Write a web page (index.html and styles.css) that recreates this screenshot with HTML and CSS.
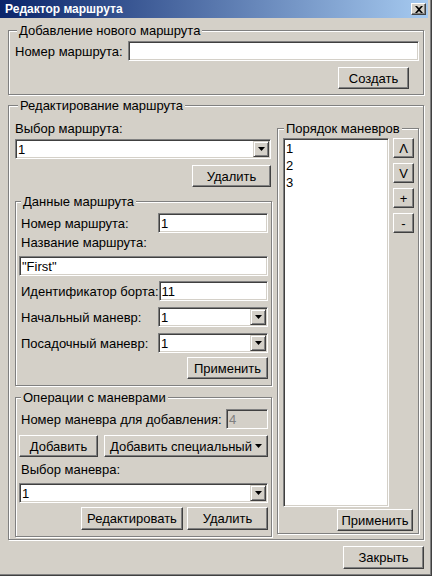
FILE: index.html
```html
<!DOCTYPE html>
<html>
<head>
<meta charset="utf-8">
<link rel="stylesheet" href="styles.css">
</head>
<body>
<div class="window">
  <div class="titlebar">
    <span class="title">Редактор маршрута</span>
    <span class="close"><svg width="8" height="7" viewBox="0 0 8 7"><path d="M0 0h2l2 2 2-2h2L5 3.5 8 7H6L4 5 2 7H0l3-3.5z" fill="#000"/></svg></span>
  </div>
  <div class="content">
    <fieldset class="group g-add">
      <legend>Добавление нового маршрута</legend>
      <div class="row">
        <span class="lbl w-add-lbl">Номер маршрута:</span>
        <div class="field grow"></div>
      </div>
      <div class="row end">
        <button class="btn b-create">Создать</button>
      </div>
    </fieldset>

    <fieldset class="group g-edit">
      <legend>Редактирование маршрута</legend>
      <div class="cols">
        <div class="leftcol">
          <span class="lbl">Выбор маршрута:</span>
          <div class="field combo c-route"><span>1</span><span class="drop"><svg width="7" height="4" viewBox="0 0 7 4"><path d="M0 0h7L3.5 4z" fill="#000"/></svg></span></div>
          <button class="btn b-del1">Удалить</button>

          <fieldset class="group g-inner g-data">
            <legend>Данные маршрута</legend>
            <div class="row between">
              <span class="lbl pl">Номер маршрута:</span>
              <div class="field w110">1</div>
            </div>
            <span class="lbl pl m2">Название маршрута:</span>
            <div class="field full m6">"First"</div>
            <div class="row between m5">
              <span class="lbl pl">Идентификатор борта:</span>
              <div class="field w110">11</div>
            </div>
            <div class="row between m6">
              <span class="lbl pl">Начальный маневр:</span>
              <div class="field combo w110"><span>1</span><span class="drop"><svg width="7" height="4" viewBox="0 0 7 4"><path d="M0 0h7L3.5 4z" fill="#000"/></svg></span></div>
            </div>
            <div class="row between m6">
              <span class="lbl pl">Посадочный маневр:</span>
              <div class="field combo w110"><span>1</span><span class="drop"><svg width="7" height="4" viewBox="0 0 7 4"><path d="M0 0h7L3.5 4z" fill="#000"/></svg></span></div>
            </div>
            <div class="row end m4">
              <button class="btn b-apply1">Применить</button>
            </div>
          </fieldset>

          <fieldset class="group g-inner g-ops">
            <legend>Операции с маневрами</legend>
            <div class="row between">
              <span class="lbl pl">Номер маневра для добавления:</span>
              <div class="field disabled w42">4</div>
            </div>
            <div class="row between m6">
              <button class="btn b-add">Добавить</button>
              <button class="btn b-addspec">Добавить специальный<svg class="caret" width="7" height="4" viewBox="0 0 7 4"><path d="M0 0h7L3.5 4z" fill="#000"/></svg></button>
            </div>
            <span class="lbl pl m5">Выбор маневра:</span>
            <div class="field combo full m6"><span>1</span><span class="drop"><svg width="7" height="4" viewBox="0 0 7 4"><path d="M0 0h7L3.5 4z" fill="#000"/></svg></span></div>
            <div class="row end gap4 m4">
              <button class="btn b-edit">Редактировать</button>
              <button class="btn b-del2">Удалить</button>
            </div>
          </fieldset>
        </div>

        <fieldset class="group g-order">
          <legend>Порядок маневров</legend>
          <div class="order">
            <div class="listbox">
              <div class="item">1</div>
              <div class="item">2</div>
              <div class="item">3</div>
            </div>
            <div class="mini">
              <button class="btn sq">Λ</button>
              <button class="btn sq">V</button>
              <button class="btn sq">+</button>
              <button class="btn sq">-</button>
            </div>
          </div>
          <div class="row end">
            <button class="btn b-apply2">Применить</button>
          </div>
        </fieldset>
      </div>
    </fieldset>

    <div class="row end">
      <button class="btn b-close">Закрыть</button>
    </div>
  </div>
</div>
</body>
</html>
```

FILE: styles.css
```css
* { box-sizing: border-box; }
html, body { margin: 0; padding: 0; }
body {
  font: 13px/15px "Liberation Sans", Arial, sans-serif;
  color: #000;
  background: #d4d0c8;
}
.window {
  width: 432px;
  height: 576px;
  background: #d4d0c8;
  box-shadow: inset -1px -1px 0 #404040, inset -2px -2px 0 #808080;
  display: flex;
  flex-direction: column;
  overflow: hidden;
}
.titlebar {
  height: 18px;
  width: 428px;
  flex: none;
  background: linear-gradient(to right, #0a246a, #a6caf0);
  display: flex;
  align-items: center;
  justify-content: space-between;
  padding: 0 2px 0 5px;
}
.title { color: #fff; font-weight: bold; font-size: 12px; line-height: 14px; }
.close {
  width: 15px;
  height: 12px;
  background: #d4d0c8;
  border: 1px solid;
  border-color: #fff #404040 #404040 #fff;
  box-shadow: inset -1px -1px 0 #808080;
  display: flex;
  align-items: center;
  justify-content: center;
}
.content {
  padding: 0 8px;
  display: flex;
  flex-direction: column;
}
fieldset.group {
  margin: 0;
  min-width: 0;
  border: 1px solid #808080;
  box-shadow: inset 1px 1px 0 #fff, 1px 1px 0 #fff;
  display: flex;
  flex-direction: column;
}
legend {
  padding: 0 2px;
  margin-left: 2px;
  line-height: 15px;
  background: #d4d0c8;
}
.g-add { margin-top: 5px !important; padding: 3px 4px 5px 6px; }
.g-edit { margin-top: 3px !important; padding: 8px 4px 2px 6px; }
.g-edit > legend { margin-left: 3px; }
.g-inner { width: 257px; padding: 4px 3px 6px 3px; }
.g-inner > legend { margin-left: 2px; }
.g-data { margin-top: 7px !important; }
.g-ops { margin-top: 4px !important; }
.g-order { width: 142px; padding: 2px 4px 2px 5px; }
.g-order > legend { margin-left: 1px; }

.row { display: flex; align-items: center; }
.row.end { justify-content: flex-end; }
.row.between { justify-content: space-between; }
.gap4 { gap: 4px; }
.grow { flex: 1; }
.lbl { line-height: 15px; white-space: nowrap; }
.pl { padding-left: 2px; }
.w-add-lbl { width: 113px; }
.m2 { margin-top: 2px; }
.m4 { margin-top: 4px; }
.m5 { margin-top: 5px; }
.m6 { margin-top: 6px; }

.field {
  height: 20px;
  background: #fff;
  border: 1px solid;
  border-color: #808080 #fff #fff #808080;
  box-shadow: inset 1px 1px 0 #404040, inset -1px -1px 0 #d4d0c8;
  padding: 0 0 0 2px;
  display: flex;
  align-items: center;
  white-space: nowrap;
}
.field.disabled { background: #d4d0c8; color: #808080; }
.w110 { width: 110px; }
.w42 { width: 42px; }
.full { width: 249px; }
.combo { justify-content: space-between; padding-right: 1px; }
.c-route { width: 256px; margin-top: 3px; }
.drop {
  width: 16px;
  height: 16px;
  background: #d4d0c8;
  border: 1px solid;
  border-color: #d4d0c8 #404040 #404040 #d4d0c8;
  box-shadow: inset 1px 1px 0 #fff, inset -1px -1px 0 #808080;
  display: flex;
  align-items: center;
  justify-content: center;
}

.btn {
  height: 22px;
  background: #d4d0c8;
  border: 1px solid;
  border-color: #fff #404040 #404040 #fff;
  box-shadow: inset -1px -1px 0 #808080;
  font: inherit;
  color: #000;
  padding: 0;
  margin: 0;
  display: flex;
  align-items: center;
  justify-content: center;
  white-space: nowrap;
}
.b-create { width: 71px; margin-top: 6px; margin-right: 10px; }
.b-del1 { width: 79px; margin-top: 6px; align-self: flex-end; margin-right: 1px; }
.b-apply1 { width: 81px; }
.b-add { width: 79px; }
.b-addspec { width: 164px; }
.caret { margin-left: 3px; }
.b-edit { width: 102px; height: 23px; }
.b-del2 { width: 81px; height: 23px; }
.b-apply2 { width: 76px; margin-top: 2px; margin-right: 1px; }
.b-close { width: 81px; height: 23px; margin-top: 6px; }

.cols { display: flex; gap: 5px; align-items: flex-start; }
.leftcol { width: 257px; display: flex; flex-direction: column; }

.order { display: flex; gap: 4px; }
.listbox {
  width: 106px;
  height: 369px;
  background: #fff;
  border: 1px solid;
  border-color: #808080 #fff #fff #808080;
  box-shadow: inset 1px 1px 0 #404040, inset -1px -1px 0 #d4d0c8;
  padding: 1px 0 0 2px;
}
.item { line-height: 17px; }
.mini { display: flex; flex-direction: column; gap: 5px; }
.sq { width: 21px; height: 20px; }
```
